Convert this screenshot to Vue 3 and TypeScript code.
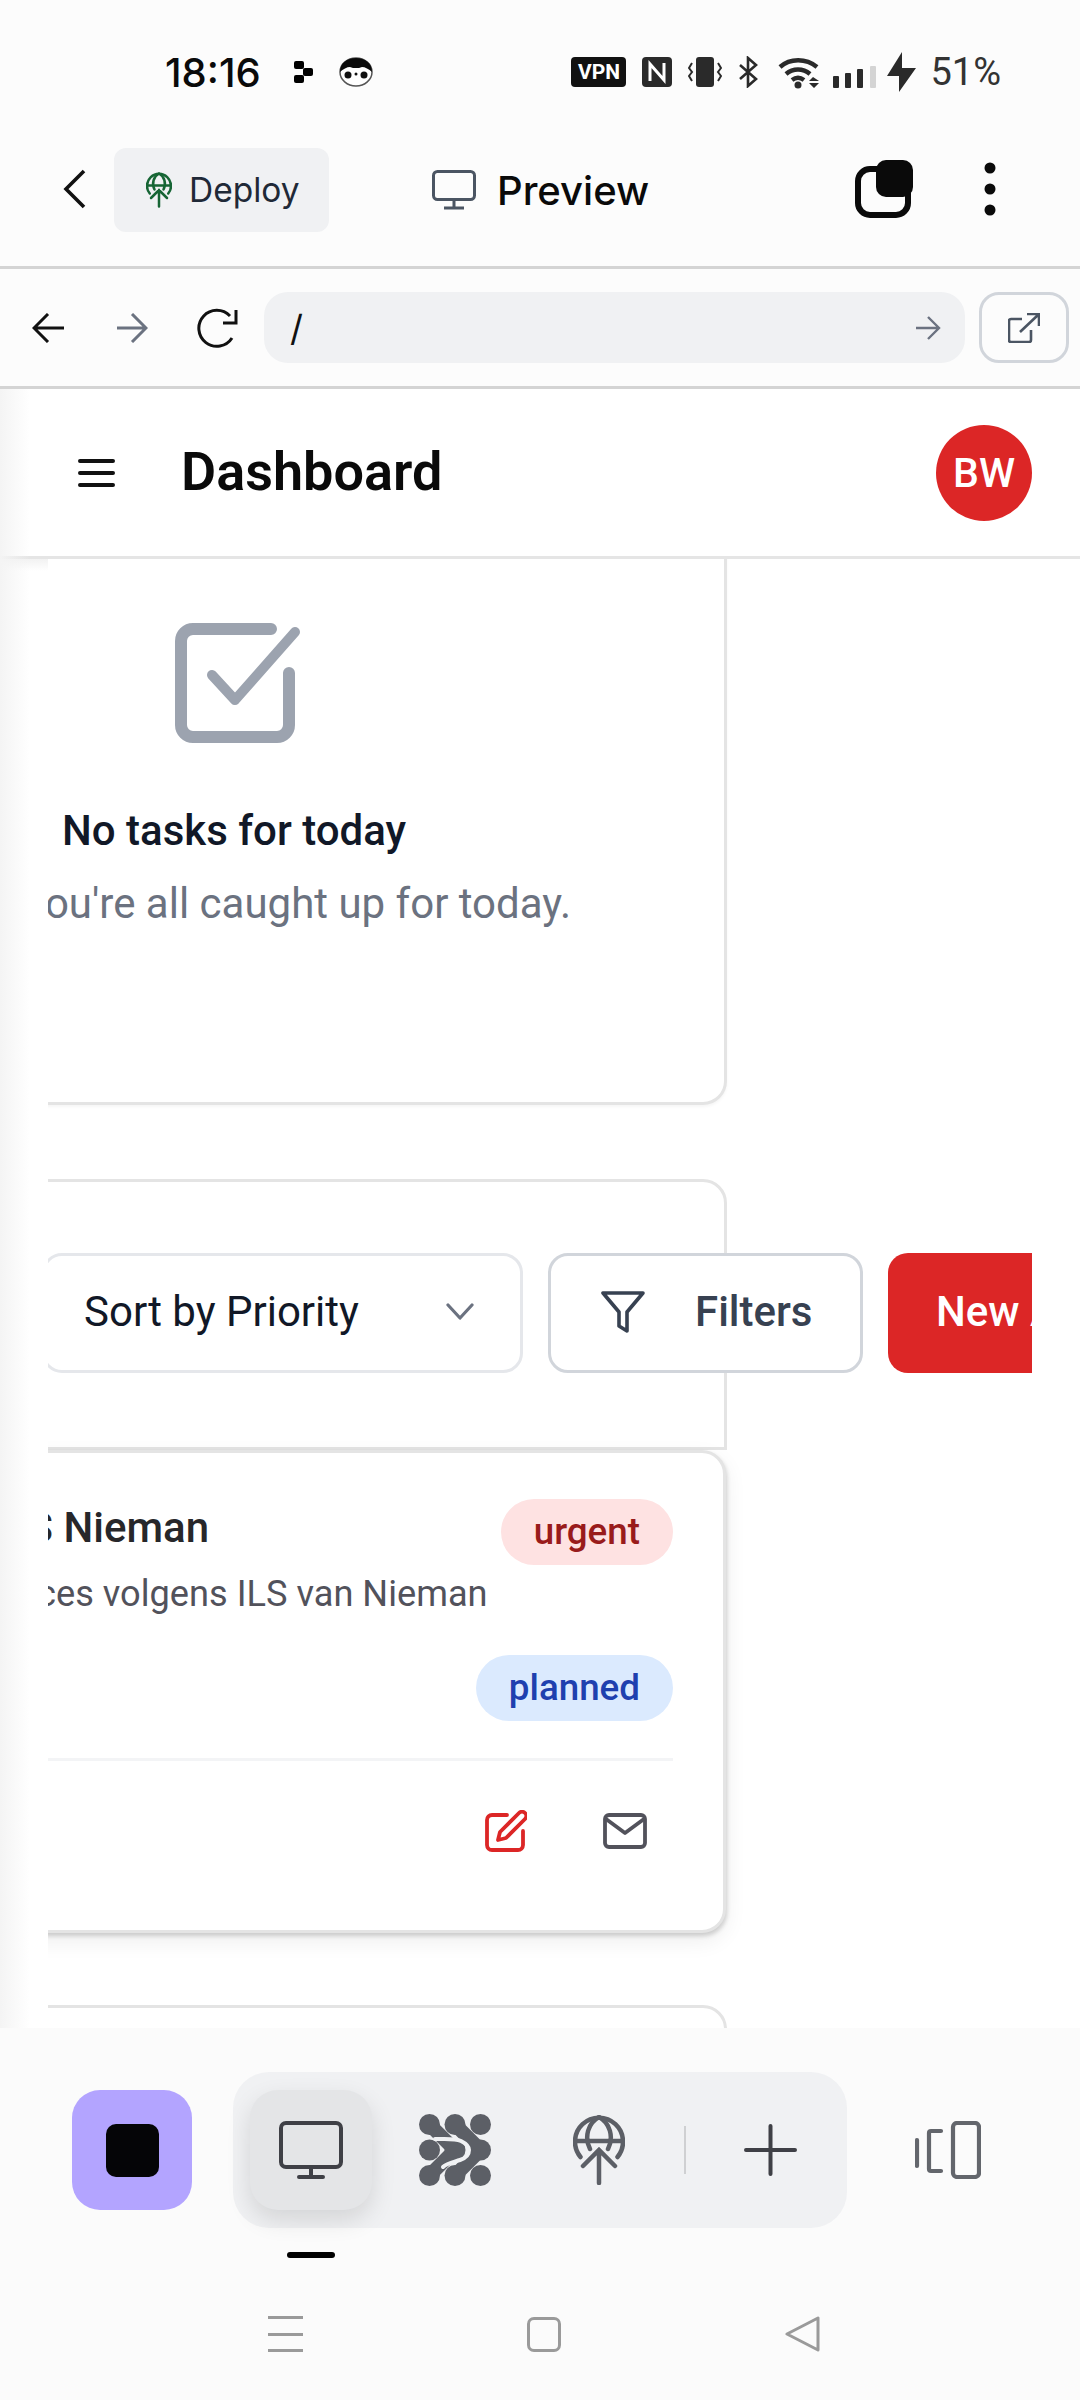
<script setup lang="ts">
const navBars = [0, 1, 2]
</script>

<template>
  <div class="phone">
    <div class="status">
      <div class="status-left">
        <span class="time">18:16</span>
        <svg class="st-dots" width="19" height="22" viewBox="0 0 19 22"><rect x="0" y="0" width="10" height="8" rx="2"/><rect x="9" y="7" width="10" height="8" rx="2"/><rect x="0" y="14" width="10" height="8" rx="2"/></svg>
        <svg class="st-peng" width="34" height="30" viewBox="0 0 34 30">
          <ellipse cx="17" cy="15" rx="16" ry="14" fill="#fff" stroke="#555" stroke-width="1.5"/>
          <path d="M1 15C1 6 8 1 17 1s16 5 16 14c-3-3-7-5-10-5-2 1-4 1-6 1s-4 0-6-1c-3 0-7 2-10 5z" fill="#0a0a0a"/>
          <circle cx="9" cy="18" r="3.500" fill="#111"/><circle cx="25" cy="18" r="3.500" fill="#111"/><circle cx="17" cy="17" r="1.500" fill="#111"/>
        </svg>
      </div>
      <div class="status-right">
        <span class="vpn">VPN</span>
        <svg width="30" height="30" viewBox="0 0 30 30"><rect width="30" height="30" rx="4" fill="#2a2a2a"/><path d="M8 24V7l14 16V6" fill="none" stroke="#fff" stroke-width="3"/></svg>
        <svg width="34" height="30" viewBox="0 0 34 30"><rect x="8" width="18" height="30" rx="3" fill="#2a2a2a"/><path d="M4 6 1 11l3 4-3 4 3 5M30 6l3 5-3 4 3 4-3 5" fill="none" stroke="#2a2a2a" stroke-width="2"/></svg>
        <svg class="st-bt" width="21" height="32" viewBox="0 0 21 32"><path d="M2 9l16 14-8 7V2l8 7L2 23" fill="none" stroke="#2a2a2a" stroke-width="2.600"/></svg>
        <svg class="st-wifi" width="43" height="33" viewBox="0 0 43 33">
          <path d="M2 11C12 2 28 2 39 11M8 18c7-6 17-6 24 0M14 24c4-3 8-3 12 0" fill="none" stroke="#2a2a2a" stroke-width="4.400"/>
          <circle cx="20" cy="29" r="3.500" fill="#2a2a2a"/>
          <path d="M33 21l6 4h-10zM29 27h10l-5 5z" fill="#2a2a2a" transform="translate(2 0)"/>
        </svg>
        <svg class="st-sig" width="43" height="22" viewBox="0 0 43 22"><rect x="0" y="10" width="6" height="12" rx="1" fill="#2a2a2a"/><rect x="12" y="7" width="6" height="15" rx="1" fill="#2a2a2a"/><rect x="24" y="3" width="6" height="19" rx="1" fill="#2a2a2a"/><rect x="37" y="0" width="6" height="22" rx="1" fill="#d4d4d4"/></svg>
        <svg class="st-bolt" width="29" height="40" viewBox="0 0 29 40"><path d="M15 0v16h14L12 40V24H0z" fill="#2a2a2a"/></svg>
        <span class="batt">51%</span>
      </div>
    </div>

    <div class="toolbar">
      <svg class="tb-back" width="23" height="40" viewBox="0 0 23 40"><path d="M21 2 3 20l18 18" fill="none" stroke="#111" stroke-width="3.600"/></svg>
      <div class="chip">
        <svg width="26" height="36" viewBox="0 0 52 70" fill="none" stroke="#166534" stroke-width="5" stroke-linecap="round">
          <path d="M7.500 42A24 24 0 1 1 44.500 42M2 26h48"/><path d="M17 34C11 22 15 8 26 2c11 6 15 20 9 32"/>
          <path d="M26 68V35M10 51l16-16 16 16"/>
        </svg>
        <span>Deploy</span>
      </div>
      <div class="tb-title">
        <svg width="44" height="40" viewBox="0 0 44 40" fill="none" stroke="#4b5563" stroke-width="3"><rect x="1.500" y="1.500" width="41" height="28" rx="4"/><path d="M22 30v8M12 38h20"/></svg>
        <span>Preview</span>
      </div>
      <div class="tb-right">
        <svg width="58" height="58" viewBox="0 0 58 58"><rect x="3" y="9" width="50" height="46" rx="12" fill="none" stroke="#0a0a0a" stroke-width="6"/><rect x="21" y="0" width="37" height="37" rx="10" fill="#0a0a0a"/></svg>
        <svg class="kebab" width="12" height="54" viewBox="0 0 12 54" fill="#0a0a0a"><circle cx="6" cy="6" r="5.500"/><circle cx="6" cy="27" r="5.500"/><circle cx="6" cy="48" r="5.500"/></svg>
      </div>
    </div>

    <div class="browser">
      <svg width="32" height="30" viewBox="0 0 32 30" fill="none" stroke="#111" stroke-width="3"><path d="M32 15H2M16 1 2 15l14 14"/></svg>
      <svg class="br-fwd" width="31" height="30" viewBox="0 0 31 30" fill="none" stroke="#6b7280" stroke-width="3"><path d="M0 15h29M15 1l14 14-14 14"/></svg>
      <svg class="br-reload" width="44" height="40" viewBox="0 0 44 40" fill="none" stroke="#111" stroke-width="3"><path d="M38 30A18 18 0 1 1 36 8"/><path d="M42 2v13H29"/></svg>
      <div class="url">
        <span>/</span>
        <svg width="25" height="24" viewBox="0 0 25 24" fill="none" stroke="#6b7280" stroke-width="2.400"><path d="M0 12h23M12 1l11 11-11 11"/></svg>
      </div>
      <div class="ext">
        <svg width="32" height="30" viewBox="0 0 32 30" fill="none" stroke="#4b5563" stroke-width="2.600"><path d="M14 6H3a2 2 0 0 0-2 2v19a2 2 0 0 0 2 2h18a2 2 0 0 0 2-2V17M12 19 30 2M19 1h12v12"/></svg>
      </div>
    </div>

    <div class="frame">
      <div class="side-shade"></div>
      <header class="head">
        <svg width="37" height="28" viewBox="0 0 37 28" fill="none" stroke="#111" stroke-width="4" stroke-linecap="round"><path d="M2 2h33M2 14h33M2 26h33"/></svg>
        <h1>Dashboard</h1>
        <div class="avatar">BW</div>
      </header>

      <div class="clip">
        <div class="scroll">
          <section class="card empty">
            <svg class="check" width="126" height="120" viewBox="0 0 126 120" fill="none" stroke="#9ca3af" stroke-width="12" stroke-linecap="round" stroke-linejoin="round">
              <path d="M96 6H18A12 12 0 0 0 6 18v84a12 12 0 0 0 12 12h84a12 12 0 0 0 12-12V50"/>
              <path d="M37 52l23 25 60-68" stroke-width="10"/>
            </svg>
            <h2>No tasks for today</h2>
            <p>You're all caught up for today.</p>
          </section>

          <section class="card-head">
            <div class="controls">
              <div class="select">
                <span>Sort by Priority</span>
                <svg width="28" height="17" viewBox="0 0 28 17" fill="none" stroke="#6b7280" stroke-width="3.200" stroke-linecap="round" stroke-linejoin="round"><path d="M2 2l12 13L26 2"/></svg>
              </div>
              <div class="filters">
                <svg width="44" height="42" viewBox="0 0 44 42" fill="none" stroke="#374151" stroke-width="3.600" stroke-linejoin="round"><path d="M2 2h40L26 21v19l-8-5V21z"/></svg>
                <span>Filters</span>
              </div>
              <div class="new-btn">New Appointment</div>
            </div>
          </section>

          <article class="task">
            <div class="task-top">
              <div class="task-text">
                <h3>ILS Nieman</h3>
                <p>Leerpreferences volgens ILS van Nieman</p>
              </div>
              <div class="pills">
                <span class="pill urgent">urgent</span>
                <span class="pill planned">planned</span>
              </div>
            </div>
            <div class="task-actions">
              <svg width="42" height="42" viewBox="0 0 42 42" fill="none" stroke="#dc2626" stroke-width="3.800" stroke-linecap="round" stroke-linejoin="round">
                <path d="M22 5H7a5 5 0 0 0-5 5v25a5 5 0 0 0 5 5h26a5 5 0 0 0 5-5V21"/>
                <path d="M34 3a4.200 4.200 0 0 1 6 6L21 28l-8 2 2-8z"/>
              </svg>
              <svg width="44" height="36" viewBox="0 0 44 36" fill="none" stroke="#52525b" stroke-width="3.800" stroke-linecap="round" stroke-linejoin="round">
                <rect x="2" y="2" width="40" height="32" rx="4"/><path d="M3 6l19 14L41 6"/>
              </svg>
            </div>
          </article>

          <section class="card next"></section>
        </div>
      </div>
    </div>

    <footer class="panel">
      <div class="dock">
        <div class="stop"><span></span></div>
        <div class="group">
          <div class="tab-on">
            <svg width="64" height="59" viewBox="0 0 64 59" fill="none" stroke="#3f4046" stroke-width="4" stroke-linecap="round"><rect x="2" y="2" width="60" height="44" rx="5"/><path d="M32 46v10M20 56h24"/></svg>
          </div>
          <svg class="g-dots" width="72" height="72" viewBox="0 0 72 72" fill="#5c5f66">
            <circle cx="10.500" cy="10.500" r="10.500"/><circle cx="36" cy="10.500" r="10.500"/><circle cx="61.500" cy="10.500" r="10.500"/>
            <circle cx="10.500" cy="36" r="10.500"/><circle cx="36" cy="36" r="10.500"/><circle cx="61.500" cy="36" r="10.500"/>
            <circle cx="10.500" cy="61.500" r="10.500"/><circle cx="36" cy="61.500" r="10.500"/><circle cx="61.500" cy="61.500" r="10.500"/>
            <path d="M10.500 10.500 36 36 10.500 61.500M36 10.500 61.500 36 36 61.500" fill="none" stroke="#5c5f66" stroke-width="14"/>
            <path d="M16 25C26 25 36 24 42 27C48 30 50 33 50 36C50 40 47 44 41 46C35 48 28 49 24 53" fill="none" stroke="#f0f1f3" stroke-width="4" stroke-linecap="round"/>
          </svg>
          <svg class="g-globe" width="52" height="70" viewBox="0 0 52 70" fill="none" stroke="#5c5f66" stroke-width="4.500" stroke-linecap="round">
            <path d="M7.500 42A24 24 0 1 1 44.500 42M2 26h48"/><path d="M17 34C11 22 15 8 26 2c11 6 15 20 9 32"/>
            <path d="M26 68V35M10 51l16-16 16 16"/>
          </svg>
          <span class="g-sep"></span>
          <svg class="g-plus" width="53" height="52" viewBox="0 0 53 52" fill="none" stroke="#3f4046" stroke-width="4" stroke-linecap="round"><path d="M2 26h49M26.500 2v48"/></svg>
        </div>
        <svg class="d-split" width="66" height="58" viewBox="0 0 66 58" fill="none" stroke="#63666c" stroke-width="4.200" stroke-linecap="round" stroke-linejoin="round">
          <path d="M2 19v26"/><path d="M26 10H16a2 2 0 0 0-2 2v36a2 2 0 0 0 2 2h10"/><rect x="38" y="2" width="26" height="54" rx="4"/>
        </svg>
      </div>
      <div class="indicator"></div>
      <div class="nav">
        <div class="nav-menu"><i v-for="b in navBars" :key="b"></i></div>
        <span class="nav-home"></span>
        <svg width="35" height="36" viewBox="0 0 35 36" fill="none" stroke="#9a9a9a" stroke-width="3" stroke-linejoin="round"><path d="M33 2v32L2 18z"/></svg>
      </div>
    </footer>
  </div>
</template>

<style scoped>
.phone {
  width: 1080px;
  height: 2400px;
  display: flex;
  flex-direction: column;
  background: #fcfcfc;
  font-family: Roboto, "Liberation Sans", sans-serif;
  overflow: hidden;
  color: #111;
}

.status {
  height: 112px;
  flex: none;
  display: flex;
  align-items: flex-end;
  justify-content: space-between;
  padding: 0 79px 20px 165px;
  box-sizing: border-box;
}
.status-left,
.status-right {
  display: flex;
  align-items: center;
  height: 40px;
}
.time {
  font-family: Inter, Roboto, sans-serif;
  font-size: 40px;
  font-weight: 500;
  color: #0a0a0a;
  width: 129px;
}
.st-peng { margin-left: 26px; }
.vpn {
  width: 55px;
  height: 30px;
  background: #111;
  color: #fff;
  border-radius: 4px;
  font-size: 21px;
  font-weight: 700;
  line-height: 30px;
  text-align: center;
  margin-right: 16px;
}
.status-right svg { margin-right: 16px; flex: none; }
.status-right .st-bt { margin-right: 19px; }
.status-right .st-wifi { margin-right: 12px; }
.status-right .st-sig { margin-right: 11px; margin-top: 10px; }
.status-right .st-bolt { margin-right: 14px; }
.batt {
  font-size: 38px;
  color: #333;
  line-height: 40px;
}

.toolbar {
  height: 157px;
  flex: none;
  display: flex;
  align-items: center;
  padding-left: 63px;
  box-sizing: border-box;
  border-bottom: 3px solid #d4d4d4;
  font-family: Inter, Roboto, sans-serif;
}
.tb-back { flex: none; }
.chip {
  margin: 2px 0 0 28px;
  width: 215px;
  height: 84px;
  background: #f0f1f3;
  border-radius: 12px;
  display: flex;
  align-items: center;
  padding-left: 32px;
  box-sizing: border-box;
  gap: 17px;
  font-size: 33.500px;
  color: #1f2937;
}
.tb-title {
  margin: 2px 0 0 103px;
  display: flex;
  align-items: center;
  gap: 21px;
  font-size: 40px;
  font-weight: 500;
  color: #0a0a0a;
}
.tb-right {
  margin-left: auto;
  display: flex;
  align-items: center;
  padding-right: 84px;
}
.kebab { margin-left: 71px; }

.browser {
  height: 120px;
  flex: none;
  display: flex;
  align-items: center;
  padding-left: 32px;
  box-sizing: border-box;
  border-bottom: 3px solid #d4d4d4;
}
.br-fwd { margin-left: 53px; }
.br-reload { margin-left: 46px; }
.url {
  margin-left: 26px;
  width: 701px;
  height: 71px;
  background: #f0f1f3;
  border-radius: 24px;
  display: flex;
  align-items: center;
  justify-content: space-between;
  padding: 0 24px 0 26px;
  box-sizing: border-box;
  font-family: Inter, Roboto, sans-serif;
  font-size: 36px;
  color: #111;
}
.ext {
  margin-left: 14px;
  width: 90px;
  height: 71px;
  border: 3px solid #d1d5db;
  border-radius: 20px;
  box-sizing: border-box;
  display: flex;
  align-items: center;
  justify-content: center;
}

.frame {
  flex: 1;
  min-height: 0;
  display: flex;
  flex-direction: column;
  position: relative;
  background: #fff;
}
.side-shade {
  position: absolute;
  left: 0;
  top: 0;
  bottom: 0;
  width: 30px;
  background: linear-gradient(to right, #f4f4f4, rgba(244, 244, 244, 0));
  z-index: 3;
}
.head {
  height: 170px;
  flex: none;
  display: flex;
  align-items: center;
  padding: 0 48px 0 78px;
  box-sizing: border-box;
  border-bottom: 3px solid #e5e5e5;
  position: relative;
}
/* shadow of the header, only visible in the gutter left of the content */
.head::after {
  content: "";
  position: absolute;
  left: 0;
  top: 100%;
  width: 48px;
  height: 12px;
  margin-top: 3px;
  background: linear-gradient(to bottom, #f2f2f2, #fff);
}
.head h1 {
  margin: -2px 0 0 66px;
  font-size: 54px;
  font-weight: 600;
  color: #0a0a0a;
}
.avatar {
  margin-left: auto;
  width: 96px;
  height: 96px;
  border-radius: 50%;
  background: #dc2626;
  color: #fff;
  font-size: 41px;
  font-weight: 500;
  display: flex;
  align-items: center;
  justify-content: center;
}

.clip {
  flex: 1;
  min-height: 0;
  margin: 0 48px;
  overflow: hidden;
  position: relative;
  z-index: 1;
  background: #fff;
}
.scroll {
  width: 983px;
  margin: -41px 0 0 -304px;
}
.card,
.card-head {
  border: 3px solid #e4e4e4;
  background: #fff;
  box-sizing: border-box;
}
.card { border-radius: 24px; }
.empty {
  height: 587px;
  padding: 102px 0 0 428px;
  box-shadow: 0 2px 3px rgba(0, 0, 0, 0.04);
}
.check { display: block; }
.empty h2 {
  margin: 60px 0 0 -113px;
  font-size: 42px;
  font-weight: 500;
  line-height: 56px;
  color: #111827;
  white-space: nowrap;
}
.empty p {
  margin: 15px 0 0 -154px;
  font-size: 42px;
  line-height: 60px;
  color: #6b7280;
  white-space: nowrap;
}

.card-head {
  margin-top: 74px;
  height: 271px;
  border-radius: 24px 24px 0 0;
  padding: 71px 0 0 295px;
}
.controls {
  display: flex;
  gap: 25px;
  width: max-content;
}
.select,
.filters {
  height: 120px;
  border: 3px solid #e5e7eb;
  border-radius: 20px;
  box-sizing: border-box;
  background: #fff;
  display: flex;
  align-items: center;
  font-size: 42px;
  padding-bottom: 3px;
}
.select {
  width: 481px;
  padding-left: 39px;
  padding-right: 46px;
  justify-content: space-between;
  color: #111827;
}
.filters {
  width: 315px;
  border-color: #d1d5db;
  padding-left: 50px;
  gap: 50px;
  color: #374151;
  font-weight: 500;
}
.new-btn {
  height: 120px;
  border-radius: 20px;
  background: #dc2626;
  color: #fff;
  font-size: 42px;
  font-weight: 500;
  display: flex;
  align-items: center;
  padding: 0 48px 3px;
  box-sizing: border-box;
  white-space: nowrap;
}

.task {
  margin-right: 1px;
  height: 483px;
  border: 3px solid #e4e4e4;
  border-radius: 24px;
  background: #fff;
  box-sizing: border-box;
  padding: 46px 50px 0 0;
  box-shadow: 1px 3px 4px rgba(0, 0, 0, 0.16), 0 8px 22px rgba(0, 0, 0, 0.07);
}
.task-top {
  display: flex;
  justify-content: space-between;
  padding-bottom: 37px;
  border-bottom: 3px solid #f3f4f6;
}
.task-text {
  white-space: nowrap;
  flex: 1;
  min-width: 0;
}
.task-text h3 {
  margin: -1px 0 1px 246px;
  font-size: 42px;
  font-weight: 500;
  line-height: 60px;
  color: #27272a;
}
.task-text p {
  margin: 11px 0 0 86px;
  font-size: 36.200px;
  line-height: 50px;
  color: #52525b;
}
.pills {
  display: flex;
  flex-direction: column;
  align-items: flex-end;
  gap: 90px;
  flex: none;
}
.pill {
  height: 66px;
  border-radius: 33px;
  padding: 0 33px 2px;
  box-sizing: border-box;
  display: flex;
  align-items: center;
  font-size: 36.750px;
  font-weight: 500;
}
.urgent { background: #fee2e2; color: #991b1b; }
.planned { background: #dbeafe; color: #1e40af; }
.task-actions {
  display: flex;
  justify-content: flex-end;
  align-items: center;
  gap: 76px;
  padding: 49px 26px 0 0;
}

.next {
  margin-top: 72px;
  height: 200px;
}

.panel {
  height: 372px;
  flex: none;
  background: #fbfbfb;
  padding-top: 44px;
  box-sizing: border-box;
  position: relative;
  z-index: 4;
}
.dock {
  display: flex;
  align-items: center;
  padding-left: 72px;
}
.stop {
  width: 120px;
  height: 120px;
  background: #b3a4ff;
  border-radius: 28px;
  display: flex;
  align-items: center;
  justify-content: center;
}
.stop span {
  width: 53px;
  height: 53px;
  background: #050507;
  border-radius: 10px;
}
.group {
  margin-left: 41px;
  width: 614px;
  height: 156px;
  background: #f0f1f3;
  border-radius: 36px;
  display: flex;
  align-items: center;
  padding-left: 17px;
  box-sizing: border-box;
}
.tab-on {
  width: 122px;
  height: 120px;
  background: #e4e5e7;
  border-radius: 28px;
  box-shadow: 0 10px 24px rgba(0, 0, 0, 0.12);
  display: flex;
  align-items: center;
  justify-content: center;
  flex: none;
}
.g-dots { margin-left: 47px; }
.g-globe { margin-left: 82px; }
.g-sep {
  margin-left: 59px;
  width: 2px;
  height: 48px;
  background: #cfd0d2;
}
.g-plus { margin-left: 58px; }
.d-split { margin-left: 68px; }
.indicator {
  width: 48px;
  height: 6px;
  border-radius: 3px;
  background: #000;
  margin: 24px 0 0 287px;
}
.nav {
  margin-top: 58px;
  padding-left: 268px;
  display: flex;
  align-items: center;
  height: 36px;
}
.nav-menu {
  width: 35px;
  height: 36px;
  display: flex;
  flex-direction: column;
  justify-content: space-between;
}
.nav-menu i {
  display: block;
  height: 3px;
  background: #9a9a9a;
}
.nav-home {
  margin-left: 224px;
  width: 34px;
  height: 35px;
  border: 3px solid #9a9a9a;
  border-radius: 7px;
  box-sizing: border-box;
}
.nav svg { margin-left: 224px; }
</style>

<style>
html,
body {
  margin: 0;
  background: #fcfcfc;
}
</style>
